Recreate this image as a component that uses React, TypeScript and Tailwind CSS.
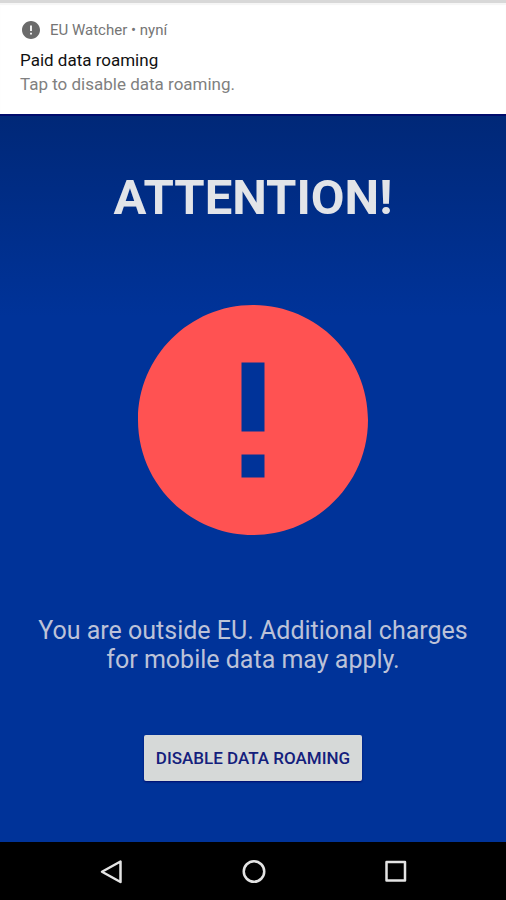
import React from "react";

function ErrorIcon({ className }: { className: string }) {
  return (
    <svg viewBox="2 2 20 20" className={className} fill="currentColor" aria-hidden="true">
      <path d="M12 2C6.48 2 2 6.48 2 12s4.48 10 10 10 10-4.48 10-10S17.52 2 12 2zm1 15h-2v-2h2v2zm0-4h-2V7h2v6z" />
    </svg>
  );
}

function Notification() {
  return (
    <header className="border-t-3 border-[#d8d8d8] bg-white px-5 pt-[17px] pb-[18px] shadow-[inset_0_2px_1px_#f6f6f6]">
      <div className="flex h-5 items-center gap-2.5 text-[15px] leading-5 text-[#757575]">
        <ErrorIcon className="ml-0.5 size-[18px] text-[#6b6b6b]" />
        <span>EU Watcher • nyní</span>
      </div>
      <h2 className="mt-2 text-[17px] leading-6 text-[#111111]">Paid data roaming</h2>
      <p className="text-[17px] leading-6 text-[#808080]">Tap to disable data roaming.</p>
    </header>
  );
}

function NavigationBar() {
  return (
    <nav className="grid h-[58px] grid-cols-[1fr_60px_1fr] items-center bg-black pr-20 pl-[82px] text-[#e4e4e4]">
      <button aria-label="Back" className="flex size-[60px] items-center justify-center">
        <svg viewBox="0 0 24 24" className="size-6" fill="none" stroke="currentColor" strokeWidth="2.5" strokeLinejoin="round">
          <path d="M20.500 1.500V22L2 11.750z" />
        </svg>
      </button>
      <button aria-label="Home" className="flex size-[60px] items-center justify-center">
        <svg viewBox="0 0 24 24" className="size-6" fill="none" stroke="currentColor" strokeWidth="2.5">
          <circle cx="12" cy="11.500" r="10.250" />
        </svg>
      </button>
      <button aria-label="Recent apps" className="flex size-[60px] items-center justify-center justify-self-end">
        <svg viewBox="0 0 24 24" className="size-6" fill="none" stroke="currentColor" strokeWidth="2.5" strokeLinejoin="round">
          <path d="M2.500 2h18.500v18.500H2.500z" />
        </svg>
      </button>
    </nav>
  );
}

export default function App() {
  return (
    <div className="flex min-h-screen flex-col bg-[#003399] font-[Roboto,sans-serif]">
      <Notification />
      <main className="flex flex-1 flex-col items-center border-t-2 border-[#000c6c] bg-[linear-gradient(#002878,#003399_200px)] px-8 pt-[52px] pb-[60px] text-center">
        <h1 className="text-[49px] leading-[60px] font-bold text-[#e2e4e8]">ATTENTION!</h1>
        <ErrorIcon className="mt-[77px] size-[230px] text-[#ff5252]" />
        <p className="mt-[81px] text-[25px] leading-[29px] text-[#bcc2d8]">
          You are outside EU. Additional charges for mobile data may apply.
        </p>
        <button className="mt-[61px] h-[46px] rounded-xs bg-[#d6d9d8] px-3 text-[17px] leading-6 font-medium text-[#14207c] shadow-[0_1px_2px_#000c6c]">
          DISABLE DATA ROAMING
        </button>
      </main>
      <NavigationBar />
    </div>
  );
}
